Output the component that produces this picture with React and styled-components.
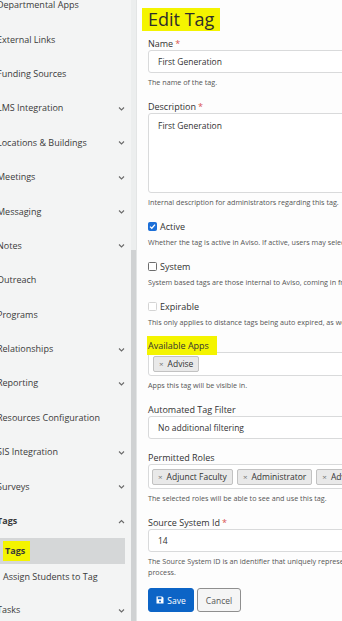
import React from "react";
import styled, { createGlobalStyle } from "styled-components";

const Global = createGlobalStyle`
  html, body { margin: 0; padding: 0; width: 342px; height: 621px; overflow: hidden; background: #fdfdfd; }
  body { font-family: "Open Sans", "Noto Sans", sans-serif; color: #333; }
  * { box-sizing: border-box; }
`;

const Page = styled.div`
  display: flex;
  width: 342px;
  height: 621px;
  overflow: hidden;
`;

const Sidebar = styled.aside`
  flex: none;
  display: flex;
  width: 137px;
  height: 100%;
  background: #f3f4f4;
  border-right: 1px solid #e3e5e5;
  overflow: hidden;
`;

const NavList = styled.nav`
  width: 131px;
  margin-top: -12px;
  display: flex;
  flex-direction: column;
`;

const ScrollTrack = styled.div`
  width: 5px;
  background: #eceeee;
  display: flex;
  flex-direction: column;
`;

const ScrollThumb = styled.div`
  margin-top: 250px;
  flex: 1;
  background: #d0d2d3;
`;

const NavRow = styled.div`
  flex: none;
  height: ${(p) => p.$h}px;
  display: flex;
  align-items: center;
  justify-content: space-between;
  padding-left: ${(p) => p.$indent}px;
  padding-right: 6px;
  margin-right: ${(p) => (p.$active ? 6 : 0)}px;
  background: ${(p) => (p.$active ? "#d5d7d8" : "transparent")};
  font-size: 9px;
  color: #3a3a3a;
  font-weight: ${(p) => (p.$bold ? 700 : 400)};
  white-space: nowrap;
`;

const NavText = styled.span`
  margin-left: ${(p) => p.$shift}px;
  padding: ${(p) => (p.$mark ? "4px 5px 4px 2px" : "0")};
  background: ${(p) => (p.$mark ? "#f4f400" : "transparent")};
  line-height: 12px;
`;

const SubList = styled.div`
  display: flex;
  flex-direction: column;
  padding-bottom: 3px;
`;

const Main = styled.main`
  flex: 1;
  min-width: 0;
  overflow: hidden;
  padding: 8px 0 0 11px;
`;

const Form = styled.div`
  width: 320px;
`;

const Heading = styled.h1`
  margin: 0 0 7px -6px;
  display: inline-block;
  padding: 0 6px;
  height: 23px;
  line-height: 23px;
  font-size: 18px;
  font-weight: 400;
  color: #2d2d2d;
  background: #f4f400;
`;

const Group = styled.div`
  margin-bottom: ${(p) => p.$mb}px;
`;

const Label = styled.div`
  height: 12px;
  line-height: 12px;
  font-size: 9px;
  color: #333;
  white-space: nowrap;
`;

const Mark = styled.span`
  display: inline-block;
  margin: -4px 0 -3px -1px;
  padding: 4px 8px 3px 1px;
  background: #f4f400;
`;

const Req = styled.span`
  color: #d9534f;
  margin-left: 2px;
`;

const Input = styled.div`
  height: ${(p) => p.$h}px;
  border: 1px solid #d9dadb;
  border-radius: 3px;
  background: #fff;
  padding: ${(p) => p.$pad};
  font-size: 8.5px;
  line-height: 12px;
  color: #333;
  display: flex;
  align-items: ${(p) => (p.$top ? "flex-start" : "center")};
  gap: 4px;
  white-space: nowrap;
`;

const Help = styled.div`
  margin-top: ${(p) => p.$mt}px;
  font-size: 7.2px;
  line-height: 11px;
  color: #555;
  white-space: nowrap;
`;

const CheckRow = styled.label`
  display: flex;
  align-items: center;
  height: 12px;
  gap: 3px;
  font-size: 9px;
  color: #333;
`;

const Box = styled.span`
  width: 9px;
  height: 9px;
  border-radius: 1.5px;
  display: flex;
  align-items: center;
  justify-content: center;
  background: ${(p) => (p.$checked ? "#1c6fd8" : "#fff")};
  border: 1px solid ${(p) => (p.$checked ? "#1c6fd8" : p.$disabled ? "#d4d4d4" : "#6d6d6d")};
`;

const Chip = styled.span`
  display: inline-flex;
  align-items: center;
  height: 16px;
  padding: 0 5px;
  border: 1px solid #c2c2c2;
  border-radius: 2px;
  background: #e9e9e9;
  font-size: 8.5px;
  color: #333;
  flex: none;
`;

const ChipX = styled.span`
  color: #777;
  margin-right: 4px;
  font-size: 8px;
`;

const Actions = styled.div`
  display: flex;
  gap: 3px;
`;

const Button = styled.button`
  height: 24px;
  width: ${(p) => p.$w}px;
  border-radius: 3px;
  font-family: inherit;
  font-size: 8.5px;
  display: flex;
  align-items: center;
  justify-content: center;
  gap: 3px;
  padding: 0;
  border: 1px solid ${(p) => (p.$primary ? "#0c64c6" : "#8f8f8f")};
  background: ${(p) => (p.$primary ? "#0c64c6" : "#f5f5f5")};
  color: ${(p) => (p.$primary ? "#fff" : "#555")};
`;

const Chevron = ({ up }) => (
  <svg width="7" height="5" viewBox="0 0 7 5">
    <polyline
      points={up ? "1,4 3.5,1.5 6,4" : "1,1.5 3.5,4 6,1.5"}
      fill="none"
      stroke="#6a6a6a"
      strokeWidth="1.1"
    />
  </svg>
);

const navItems = [
  ["Departmental Apps", false],
  ["External Links", false],
  ["Funding Sources", false],
  ["LMS Integration", true],
  ["Locations & Buildings", true],
  ["Meetings", true],
  ["Messaging", true],
  ["Notes", true],
  ["Outreach", false],
  ["Programs", false],
  ["Relationships", true],
  ["Reporting", true],
  ["Resources Configuration", false],
  ["SIS Integration", true],
  ["Surveys", true],
];

const Floppy = () => (
  <svg width="8" height="8" viewBox="0 0 8 8">
    <path d="M0.5 0.5 H6.2 L7.5 1.8 V7.5 H0.5 Z" fill="#fff" />
    <rect x="1.8" y="1.2" width="3.6" height="2" fill="#0c64c6" />
    <circle cx="4" cy="5.5" r="1" fill="#0c64c6" />
  </svg>
);

export default function App() {
  return (
    <>
      <Global />
      <Page>
        <Sidebar>
          <NavList>
            {navItems.map(([name, chev]) => (
              <NavRow key={name} $h={34.4} $indent={0}>
                <NavText $shift={-3}>{name}</NavText>
                {chev && <Chevron />}
              </NavRow>
            ))}
            <NavRow $h={34.4} $indent={0} $bold>
              <NavText $shift={-3}>Tags</NavText>
              <Chevron up />
            </NavRow>
            <SubList>
              <NavRow $h={26} $indent={3} $active $bold>
                <NavText $shift={0} $mark>Tags</NavText>
              </NavRow>
              <NavRow $h={26} $indent={3}>
                <NavText $shift={0}>Assign Students to Tag</NavText>
              </NavRow>
            </SubList>
            <NavRow $h={34.4} $indent={0}>
              <NavText $shift={-3}>Tasks</NavText>
              <Chevron />
            </NavRow>
          </NavList>
          <ScrollTrack>
            <ScrollThumb />
          </ScrollTrack>
        </Sidebar>

        <Main>
          <Form>
            <Heading>Edit Tag</Heading>

            <Group $mb={13}>
              <Label>
                Name<Req>*</Req>
              </Label>
              <Input $h={23} $pad="0 9px">First Generation</Input>
              <Help $mt={4}>The name of the tag.</Help>
            </Group>

            <Group $mb={12}>
              <Label>
                Description<Req>*</Req>
              </Label>
              <Input $h={80} $pad="6px 9px" $top>
                First Generation
              </Input>
              <Help $mt={4}>Internal description for administrators regarding this tag.</Help>
            </Group>

            <Group $mb={12}>
              <CheckRow>
                <Box $checked>
                  <svg width="7" height="7" viewBox="0 0 7 7">
                    <polyline points="1,3.6 2.8,5.3 6,1.6" fill="none" stroke="#fff" strokeWidth="1.3" />
                  </svg>
                </Box>
                Active
              </CheckRow>
              <Help $mt={5}>
                Whether the tag is active in Aviso. If active, users may select this tag.
              </Help>
            </Group>

            <Group $mb={12}>
              <CheckRow>
                <Box />
                System
              </CheckRow>
              <Help $mt={5}>
                System based tags are those internal to Aviso, coming in from the import process.
              </Help>
            </Group>

            <Group $mb={12}>
              <CheckRow>
                <Box $disabled />
                Expirable
              </CheckRow>
              <Help $mt={5}>
                This only applies to distance tags being auto expired, as well as others.
              </Help>
            </Group>

            <Group $mb={13}>
              <Label>
                <Mark>Available Apps</Mark>
              </Label>
              <Input $h={24} $pad="0 4px">
                <Chip>
                  <ChipX>×</ChipX>Advise
                </Chip>
              </Input>
              <Help $mt={4}>Apps this tag will be visible in.</Help>
            </Group>

            <Group $mb={13}>
              <Label>Automated Tag Filter</Label>
              <Input $h={23} $pad="0 9px">No additional filtering</Input>
            </Group>

            <Group $mb={13}>
              <Label>Permitted Roles</Label>
              <Input $h={25} $pad="0 3px">
                <Chip>
                  <ChipX>×</ChipX>Adjunct Faculty
                </Chip>
                <Chip>
                  <ChipX>×</ChipX>Administrator
                </Chip>
                <Chip>
                  <ChipX>×</ChipX>Advisor
                </Chip>
              </Input>
              <Help $mt={4}>The selected roles will be able to see and use this tag.</Help>
            </Group>

            <Group $mb={10}>
              <Label>
                Source System Id<Req>*</Req>
              </Label>
              <Input $h={23} $pad="0 9px">14</Input>
              <Help $mt={4}>
                The Source System ID is an identifier that uniquely represents this tag in the import
                <br />
                process.
              </Help>
            </Group>

            <Actions>
              <Button $primary $w={46}>
                <Floppy />
                Save
              </Button>
              <Button $w={44}>Cancel</Button>
            </Actions>
          </Form>
        </Main>
      </Page>
    </>
  );
}
